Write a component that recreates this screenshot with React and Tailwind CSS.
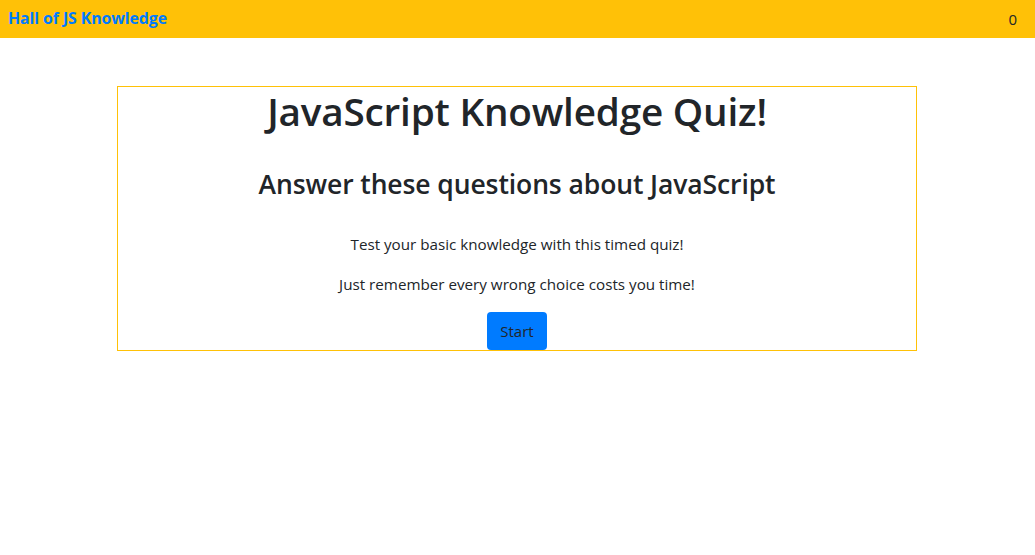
export default function App() {
  const font = { fontFamily: '"Open Sans", "Noto Sans", sans-serif' };
  return (
    <div className="min-h-[555px] bg-white text-[#212529]" style={font}>
      <nav className="h-[38px] bg-[#ffc107] flex items-center justify-between pl-2 pr-[18px]">
        <a className="text-[#007bff] font-bold text-[15.9px] tracking-[-0.1px]">Hall of JS Knowledge</a>
        <span className="text-[15px] text-[#212529]">0</span>
      </nav>
      <div className="flex justify-center pr-px">
        <div className="mt-[48px] w-[800px] border border-[#ffc107] text-center">
          <h1 className="text-[38.7px] leading-[48px] font-semibold mt-0 mb-2 tracking-[-0.2px]">JavaScript Knowledge Quiz!</h1>
          <h2 className="text-[26.5px] leading-[32px] font-semibold mt-[33px] mb-[32px] tracking-[-0.1px]">Answer these questions about JavaScript</h2>
          <p className="text-[15.2px] leading-[24px] mb-4">Test your basic knowledge with this timed quiz!</p>
          <p className="text-[15.2px] leading-[24px] mb-4">Just remember every wrong choice costs you time!</p>
          <button className="bg-[#007bff] text-[#212529] text-[15px] leading-[24px] px-[13px] py-[7px] rounded-[4px] align-bottom">Start</button>
        </div>
      </div>
    </div>
  );
}
